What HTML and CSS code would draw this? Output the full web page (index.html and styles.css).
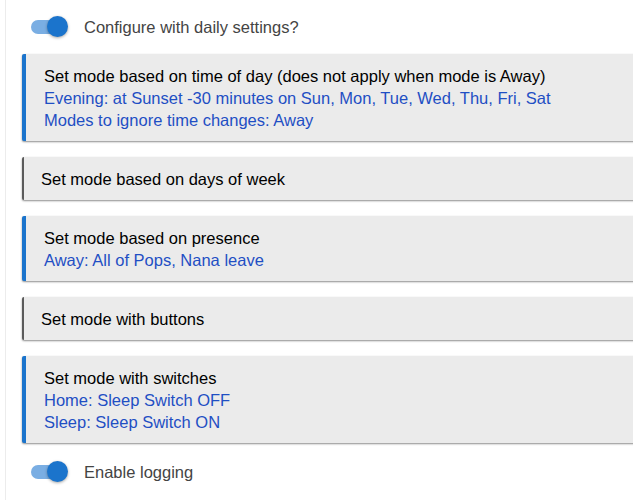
FILE: index.html
```html
<!DOCTYPE html>
<html>
<head>
<meta charset="utf-8">
<link rel="stylesheet" href="styles.css">
</head>
<body>
<div class="page">
  <div class="toggle-row first">
    <span class="switch"><span class="track"></span><span class="knob"></span></span>
    <span class="label">Configure with daily settings?</span>
  </div>
  <div class="cards">
    <div class="card active">
      <div class="title">Set mode based on time of day (does not apply when mode is Away)</div>
      <div class="info">Evening: at Sunset -30 minutes on Sun, Mon, Tue, Wed, Thu, Fri, Sat</div>
      <div class="info">Modes to ignore time changes: Away</div>
    </div>
    <div class="card">
      <div class="title">Set mode based on days of week</div>
    </div>
    <div class="card active">
      <div class="title">Set mode based on presence</div>
      <div class="info">Away: All of Pops, Nana leave</div>
    </div>
    <div class="card">
      <div class="title">Set mode with buttons</div>
    </div>
    <div class="card active">
      <div class="title">Set mode with switches</div>
      <div class="info">Home: Sleep Switch OFF</div>
      <div class="info">Sleep: Sleep Switch ON</div>
    </div>
  </div>
  <div class="toggle-row last">
    <span class="switch"><span class="track"></span><span class="knob"></span></span>
    <span class="label">Enable logging</span>
  </div>
</div>
</body>
</html>
```
FILE: styles.css
```css
html, body {
  margin: 0;
  padding: 0;
  background: #fff;
  overflow: hidden;
}
body {
  font-family: "Liberation Sans", Arial, sans-serif;
  font-size: 16.5px;
  width: 633px;
  height: 500px;
}
.page {
  margin-left: 5px;
  border-left: 1px solid #ececec;
  width: 720px;
  height: 500px;
  padding-top: 16px;
  box-sizing: border-box;
}
.toggle-row {
  display: flex;
  align-items: center;
  height: 22px;
  padding-left: 25px;
}
.switch {
  position: relative;
  width: 36px;
  height: 22px;
  flex: none;
}
.track {
  position: absolute;
  left: 0;
  top: 4px;
  width: 30px;
  height: 14px;
  border-radius: 7px;
  background: #7aaee3;
}
.knob {
  position: absolute;
  left: 16px;
  top: 0;
  width: 21px;
  height: 21px;
  border-radius: 50%;
  background: #1b74cc;
  box-shadow: 0 1px 3px rgba(0,0,0,0.35);
}
.label {
  margin-left: 17px;
  color: #444;
}
.cards {
  display: flex;
  flex-direction: column;
  gap: 16px;
  margin-top: 16px;
  margin-left: 16px;
}
.card {
  background: #ebebeb;
  border-left: 2px solid #5a5a5a;
  border-radius: 2px;
  padding: 11px 0 10px 17px;
  line-height: 22px;
  box-shadow: 0 1px 2px rgba(0,0,0,0.45);
}
.card.active {
  border-left: 4px solid #1b74cc;
  padding-left: 18px;
}
.title {
  color: #000;
}
.info {
  color: #1f4fc4;
}
.toggle-row.last {
  margin-top: 18px;
}
```
